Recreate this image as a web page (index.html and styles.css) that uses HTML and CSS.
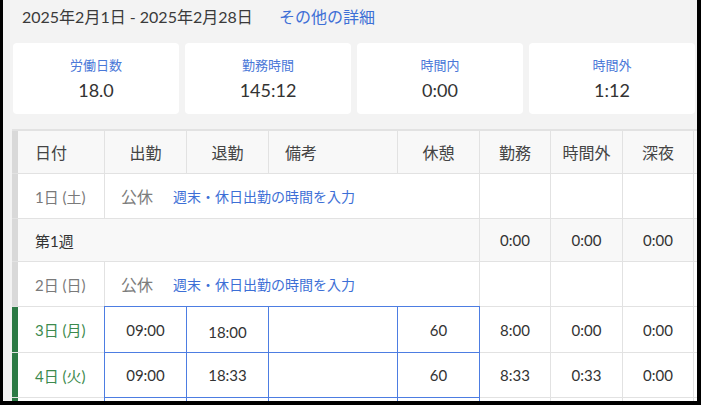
FILE: index.html
```html
<!DOCTYPE html>
<html lang="ja">
<head>
  <meta charset="UTF-8" />
  <title>勤務表</title>
  <link rel="stylesheet" href="styles.css">
</head>
<body>
  <div class="screen">
    <!-- Period -->
    <div class="period">
      <span class="range">2025年2月1日 - 2025年2月28日</span>
      <a class="more" href="#">その他の詳細</a>
    </div>

    <!-- Summary cards -->
    <div class="summary">
      <div class="card"><div class="card-label">労働日数</div><div class="card-value">18.0</div></div>
      <div class="card"><div class="card-label">勤務時間</div><div class="card-value">145:12</div></div>
      <div class="card"><div class="card-label">時間内</div><div class="card-value">0:00</div></div>
      <div class="card"><div class="card-label">時間外</div><div class="card-value">1:12</div></div>
    </div>

    <!-- Timesheet -->
    <div class="sheet">
      <div class="cell head date">日付</div>
      <div class="cell head center">出勤</div>
      <div class="cell head center">退勤</div>
      <div class="cell head">備考</div>
      <div class="cell head center">休憩</div>
      <div class="cell head center">勤務</div>
      <div class="cell head center">時間外</div>
      <div class="cell head center">深夜</div>
      <div class="cell head"></div>

      <div class="cell date off">1日 (土)</div>
      <div class="cell span4"><span class="holiday">公休</span><a class="enter" href="#">週末・休日出勤の時間を入力</a></div>
      <div class="cell"></div>
      <div class="cell"></div>
      <div class="cell"></div>
      <div class="cell"></div>

      <div class="cell date week span5">第1週</div>
      <div class="cell week center">0:00</div>
      <div class="cell week center">0:00</div>
      <div class="cell week center">0:00</div>
      <div class="cell week"></div>

      <div class="cell date off">2日 (日)</div>
      <div class="cell span4"><span class="holiday">公休</span><a class="enter" href="#">週末・休日出勤の時間を入力</a></div>
      <div class="cell"></div>
      <div class="cell"></div>
      <div class="cell"></div>
      <div class="cell"></div>

      <div class="cell date work">3日 (月)</div>
      <div class="cell input center">09:00</div>
      <div class="cell input center low">18:00</div>
      <div class="cell input"></div>
      <div class="cell input center">60</div>
      <div class="cell center">8:00</div>
      <div class="cell center">0:00</div>
      <div class="cell center">0:00</div>
      <div class="cell"></div>

      <div class="cell date work">4日 (火)</div>
      <div class="cell input center">09:00</div>
      <div class="cell input center">18:33</div>
      <div class="cell input"></div>
      <div class="cell input center">60</div>
      <div class="cell center">8:33</div>
      <div class="cell center">0:33</div>
      <div class="cell center">0:00</div>
      <div class="cell"></div>

      <!-- next row, only its top edge shows -->
      <div class="cell date work"></div>
      <div class="cell input"></div>
      <div class="cell input"></div>
      <div class="cell input"></div>
      <div class="cell input"></div>
      <div class="cell"></div>
      <div class="cell"></div>
      <div class="cell"></div>
      <div class="cell"></div>
    </div>
  </div>
</body>
</html>
```

FILE: styles.css
```css
body {
  margin: 0;
  font-family: Lato, "Noto Sans CJK JP", sans-serif;
  color: #333;
}

.screen {
  width: 701px;
  height: 405px;
  box-sizing: border-box;
  border-left: 3px solid #000;
  border-right: 4px solid #000;
  border-bottom: 4px solid #000;
  background: #f3f3f3;
  overflow: hidden;
}

/* Period */
.period {
  height: 43px;
  box-sizing: border-box;
  padding: 6px 0 0 19px;
  line-height: 22px;
  font-size: 16px;
}
.range {
  color: #3a3a3a;
}
.more {
  margin-left: 22px;
  color: #3d6fd6;
  text-decoration: none;
}

/* Summary */
.summary {
  display: flex;
  gap: 6px;
  margin-left: 10px;
}
.card {
  flex: 0 0 166px;
  height: 71px;
  background: #fff;
  border-radius: 4px;
  text-align: center;
}
.card-label {
  padding-top: 13px;
  font-size: 13px;
  line-height: 18px;
  color: #4a78d8;
}
.card-value {
  margin-top: 4px;
  font-size: 18px;
  line-height: 24px;
  color: #333;
}

/* Sheet */
.sheet {
  display: grid;
  grid-template-columns: 92px 81px 81px 128px 81px 70px 71px 70px 80px;
  grid-template-rows: 42px 44px 42px 44px 45px 44px 44px;
  gap: 1px;
  width: max-content;
  margin: 15px 0 0 9px;
  border-top: 2px solid #e2e2e2;
  background: #e2e2e2;
  font-size: 15px;
}
.cell {
  display: flex;
  align-items: center;
  padding: 0 16px;
  background: #fff;
  white-space: nowrap;
}
.center {
  justify-content: center;
  padding: 0;
}
.head {
  background: #f8f8f8;
  color: #444;
  font-size: 16px;
}
.week {
  background: #f8f8f8;
}
.date {
  border-left: 6px solid #d9d9d9;
  padding-left: 17px;
}
.date.off {
  color: #7a7a7a;
}
.date.work {
  border-left-color: #2c7a45;
  color: #3c8a4e;
}
.span4 {
  grid-column: span 4;
}
.span5 {
  grid-column: span 5;
}
.holiday {
  font-size: 16px;
  color: #7d7d7d;
}
.enter {
  margin-left: 20px;
  font-size: 14px;
  color: #3d6fd6;
  text-decoration: none;
}
.input {
  outline: 1px solid #4d7de2;
}
.low {
  padding-top: 4px;
}
```
